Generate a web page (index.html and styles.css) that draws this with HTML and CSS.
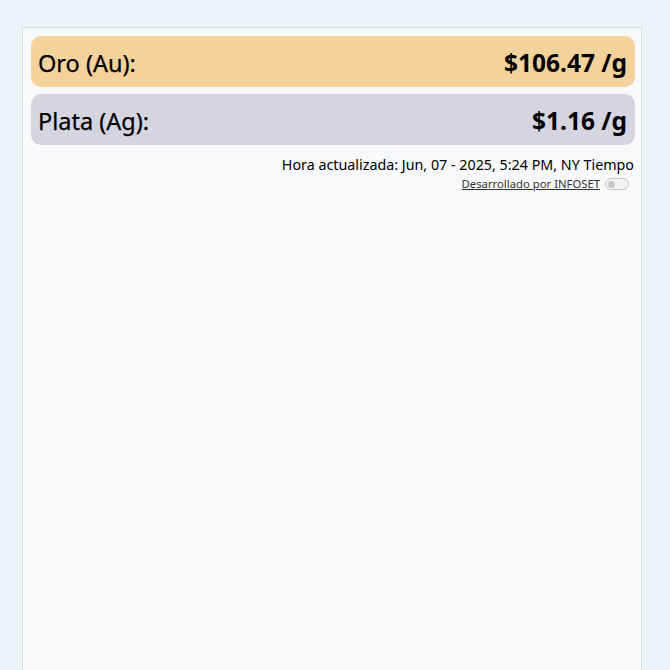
FILE: index.html
```html
<!DOCTYPE html>
<html lang="es">
<head>
<meta charset="utf-8">
<title>Precios</title>
<link rel="stylesheet" href="styles.css">
</head>
<body>
<div class="card">
  <div class="row gold"><span class="label">Oro (Au):</span><span class="price">$106.47 /g</span></div>
  <div class="row silver"><span class="label">Plata (Ag):</span><span class="price">$1.16 /g</span></div>
  <div class="time">Hora actualizada: Jun, 07 - 2025, 5:24 PM, NY Tiempo</div>
  <div class="credit"><a href="#">Desarrollado por INFOSET</a><span class="toggle"><span class="knob"></span></span></div>
</div>
</body>
</html>
```
FILE: styles.css
```css
html, body { margin: 0; padding: 0; }
body {
  background: #edf1f8;
  font-family: "Noto Sans", "Open Sans", sans-serif;
  color: #000;
  height: 670px;
  overflow: hidden;
}
.card {
  margin: 27px 28px 0 22px;
  background: #f8f9fb;
  border: 1px solid #d9dce2;
  border-bottom: none;
  padding: 8px 6px 0 8px;
  height: 640px;
}
.row {
  display: flex;
  justify-content: space-between;
  align-items: center;
  height: 51px;
  border-radius: 10px;
  padding: 2px 8px 0 7px;
  box-sizing: border-box;
  margin-bottom: 7px;
}
.gold { background: #f3d29b; }
.silver { background: #d4d5e1; }
.label { font-size: 23.5px; -webkit-text-stroke: 0.25px #000; }
.price { font-size: 24.5px; font-weight: 700; }
.time {
  text-align: right;
  font-size: 14.3px;
  margin-top: 10px;
  margin-right: 1px;
  line-height: 20px;
}
.credit {
  display: flex;
  justify-content: flex-end;
  align-items: center;
  gap: 5px;
  font-size: 11.3px;
  line-height: 16px;
  margin-right: 6px;
  margin-top: 1px;
}
.credit a { color: #333; }
.toggle {
  width: 24px;
  height: 12px;
  border: 1px solid #c8c8c8;
  border-radius: 6px;
  background: #f2f2f2;
  display: flex;
  align-items: center;
  padding-left: 2px;
  box-sizing: border-box;
}
.knob { width: 7px; height: 7px; border-radius: 50%; background: #c8c8c8; }
```
